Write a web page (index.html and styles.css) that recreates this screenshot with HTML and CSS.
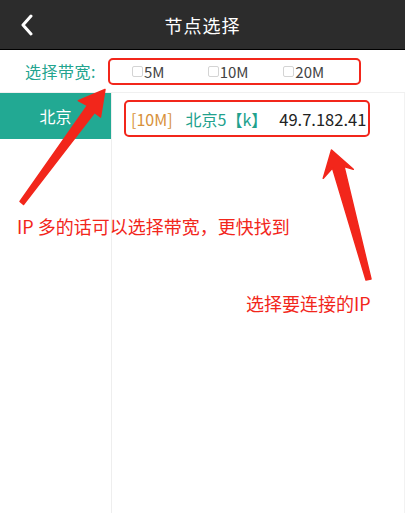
FILE: index.html
```html
<!DOCTYPE html>
<html lang="zh">

<head>
    <meta charset="UTF-8">
    <meta name="viewport" content="width=device-width, initial-scale=1.0">
    <title>节点选择</title>
    <link rel="stylesheet" href="styles.css">
</head>

<body>
    <div class="page">
        <header class="topbar">
            <button class="back" title="返回">
                <svg width="14" height="22" viewBox="0 0 14 22">
                    <polyline points="11,2 3,11 11,20" fill="none" stroke="#fff" stroke-width="3" stroke-linecap="round" stroke-linejoin="round" />
                </svg>
            </button>
            <h1 class="title">节点选择</h1>
        </header>

        <div class="filter">
            <span class="filterLabel">选择带宽:</span>
            <div class="bwOptions">
                <label class="bwOption"><span class="box"></span>5M</label>
                <label class="bwOption"><span class="box"></span>10M</label>
                <label class="bwOption"><span class="box"></span>20M</label>
            </div>
        </div>

        <div class="main">
            <ul class="regions">
                <li class="region active">北京</li>
            </ul>
            <div class="nodes">
                <div class="node">
                    <span class="nodeBw">[10M]</span>
                    <span class="nodeName">北京5【k】</span>
                    <span class="nodeIp">49.7.182.41</span>
                </div>
            </div>
        </div>

        <!-- annotation arrows over the screen -->
        <svg class="marks" width="405" height="513" viewBox="0 0 405 513">
            <polygon points="105,89.5 78.3,100.7 87.5,105.5 20,201.5 23.5,204.5 94.5,112.5 100.5,117"
                fill="#f2261b" stroke="#f2261b" stroke-width="1.5" stroke-linejoin="round" />
            <polygon points="331.5,150 323.3,178.3 332.5,168 366,280 371,279 344,166.5 353.3,169.3"
                fill="#f2261b" stroke="#f2261b" stroke-width="1.5" stroke-linejoin="round" />
        </svg>
        <div class="note noteBw">IP 多的话可以选择带宽，更快找到</div>
        <div class="note noteIp">选择要连接的IP</div>
    </div>
</body>

</html>
```

FILE: styles.css
```css
* {
    box-sizing: border-box;
}

body {
    margin: 0;
    padding: 0;
    font-family: "Noto Sans CJK SC", "Noto Sans", sans-serif;
    background-color: #fff;
}

.page {
    position: relative;
    width: 405px;
    height: 513px;
    display: flex;
    flex-direction: column;
    overflow: hidden;
}

.topbar {
    height: 50px;
    flex-shrink: 0;
    background-color: #2c2c2c;
    border-bottom: 1px solid #000;
    display: flex;
    align-items: center;
    justify-content: center;
    position: relative;
}

.back {
    position: absolute;
    left: 20px;
    top: 14px;
    width: 18px;
    height: 22px;
    padding: 0;
    border: none;
    background: none;
    display: flex;
}

.title {
    margin: 0;
    color: #fff;
    font-size: 18px;
    font-weight: normal;
    letter-spacing: 1px;
}

.filter {
    height: 43px;
    flex-shrink: 0;
    display: flex;
    align-items: center;
    padding-left: 25px;
    border-bottom: 1px solid #f0f0f0;
}

.filterLabel {
    color: #23a48f;
    font-size: 16px;
    letter-spacing: 0.5px;
    width: 83px;
}

.bwOptions {
    width: 253px;
    height: 27px;
    border: 2px solid #f2261b;
    border-radius: 5px;
    display: flex;
    align-items: center;
    padding-left: 22px;
}

.bwOption {
    width: 81px;
    display: flex;
    align-items: center;
    font-size: 15px;
    color: #444;
}

.box {
    width: 11px;
    height: 11px;
    border: 1px solid #d4d4d4;
    border-radius: 2px;
    margin-right: 1px;
}

.main {
    flex: 1;
    display: flex;
    border-right: 1px solid #f2f2f2;
}

.regions {
    list-style: none;
    margin: 0;
    padding: 0;
    width: 112px;
    flex-shrink: 0;
    border-right: 1px solid #eee;
}

.region {
    height: 46px;
    display: flex;
    align-items: center;
    justify-content: center;
    font-size: 16px;
    color: #333;
}

.region.active {
    background-color: #22a993;
    color: #fff;
}

.nodes {
    flex: 1;
    padding: 7px 0 0 12px;
}

.node {
    width: 246px;
    height: 37px;
    border: 2px solid #f2261b;
    border-radius: 5px;
    display: flex;
    align-items: center;
    padding-left: 5px;
    font-size: 16px;
}

.nodeBw {
    color: #d8913a;
    margin-right: 13px;
}

.nodeName {
    color: #22a18d;
    margin-right: 12px;
}

.nodeIp {
    color: #222;
    font-size: 16.5px;
}

.marks {
    position: absolute;
    left: 0;
    top: 0;
    pointer-events: none;
}

.note {
    position: absolute;
    color: #f2261b;
    font-size: 18px;
    line-height: 24px;
    white-space: nowrap;
}

.noteBw {
    left: 17px;
    top: 214px;
}

.noteIp {
    left: 246px;
    top: 291px;
}
```
